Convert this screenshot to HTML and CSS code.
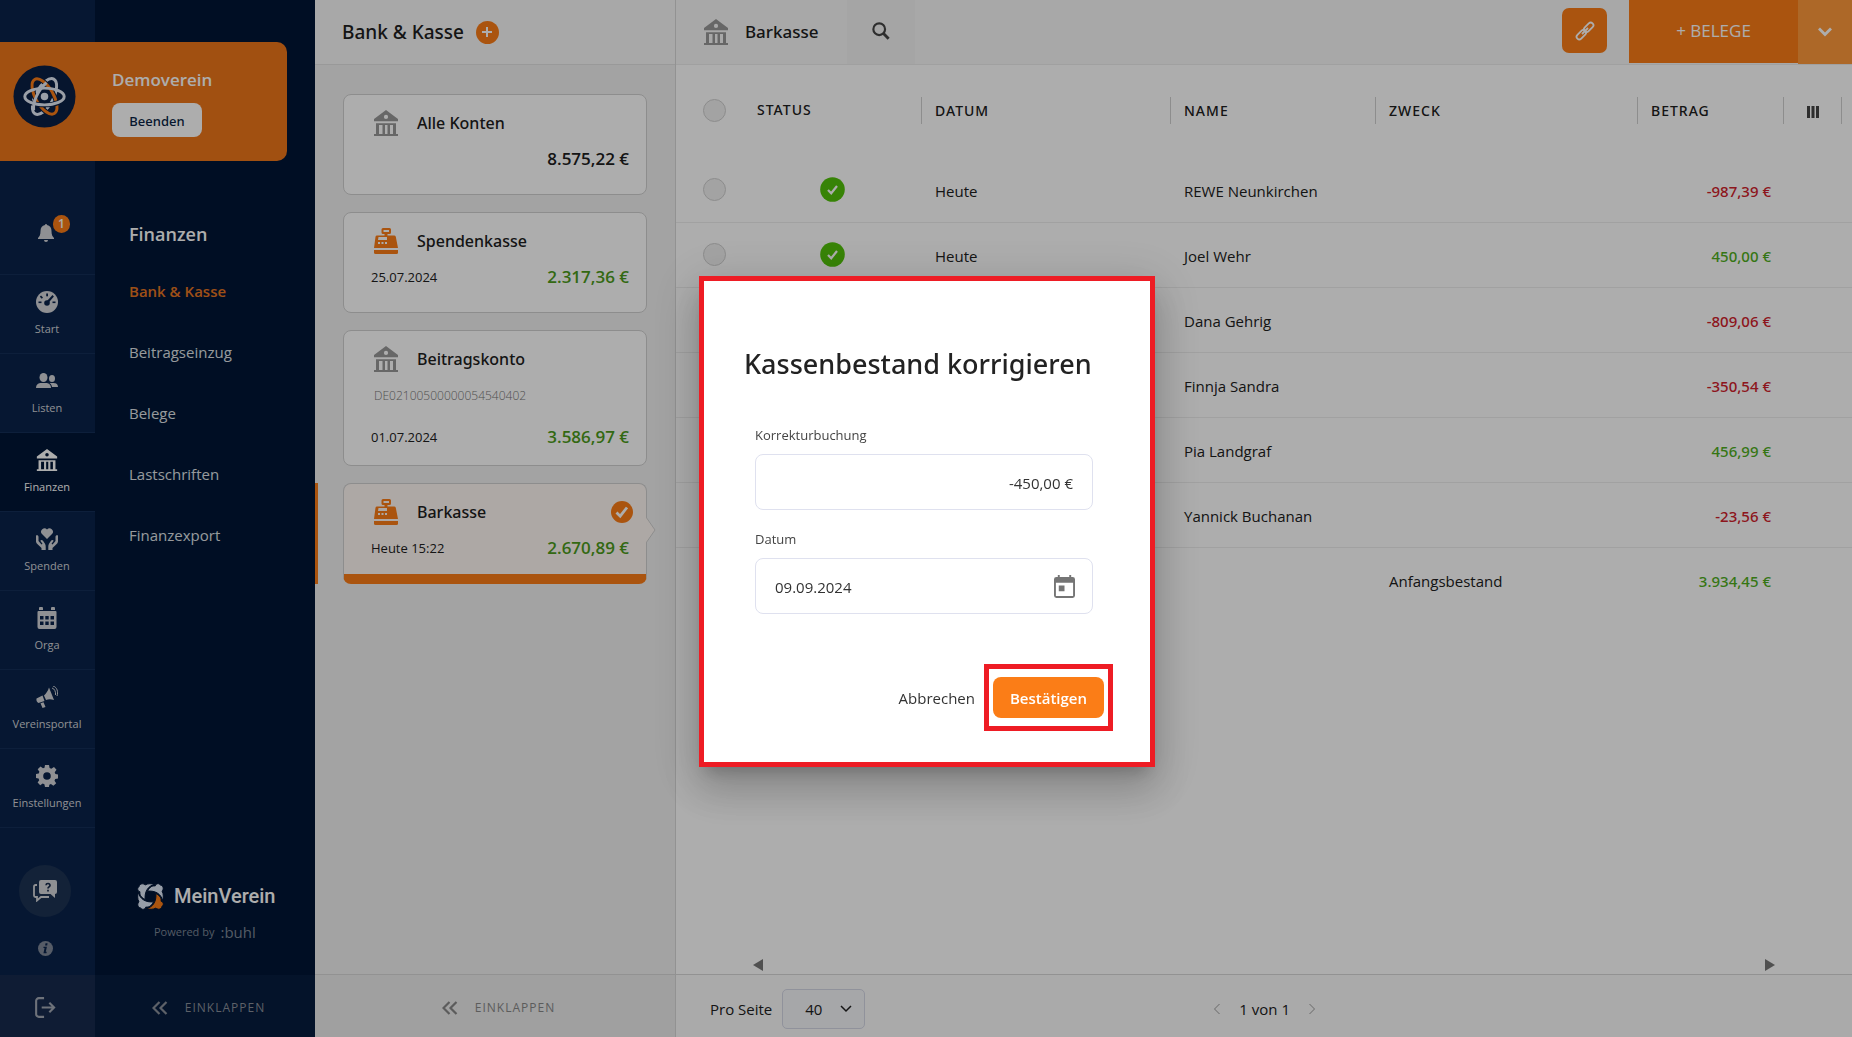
FILE: index.html
```html
<!DOCTYPE html>
<html lang="de">
<head>
<meta charset="utf-8">
<meta name="viewport" content="width=device-width, initial-scale=1">
<title>MeinVerein – Bank &amp; Kasse</title>
<link rel="stylesheet" href="styles.css">
</head>
<body>
<svg class="sprite" aria-hidden="true">
  <symbol id="bank" viewBox="0 0 24 26">
    <path fill-rule="evenodd" d="M12 0 24 9v2.200H0V9zM12 4.800a2.100 2.100 0 1 0 0 4.200 2.100 2.100 0 0 0 0-4.200z"/>
    <path d="M2 13.200h20V15H2zM2 15h3v9H2zM8.500 15h2.500v9H8.500zM13.500 15H16v9h-2.500zM19 15h3v9h-3zM0 24h24v2H0z"/>
  </symbol>
  <symbol id="register" viewBox="0 0 24 26">
    <path fill-rule="evenodd" d="M9 0h6.500a1.500 1.500 0 0 1 1.500 1.500v3A1.500 1.500 0 0 1 15.500 6h-2v1.500H20a1.800 1.800 0 0 1 1.800 1.300L24 20H0L1.500 8.700A1.500 1.500 0 0 1 3 7.500h7.500V6H9a1.500 1.500 0 0 1-1.500-1.500v-3A1.500 1.500 0 0 1 9 0zm.500 2v2H15V2zM4.500 9 4 12h9V9zM4 14v2h2v-2zm3.500 0v2h2v-2zm3.500 0v2h2v-2z"/>
    <path d="M0 22h24v2.500a1.500 1.500 0 0 1-1.500 1.500h-21A1.500 1.500 0 0 1 0 24.500z"/>
  </symbol>
  <symbol id="check" viewBox="0 0 22 22">
    <circle cx="11" cy="11" r="11"/>
    <path d="m5.500 11.500 3.700 3.700L16 6.500" fill="none" stroke="#fff" stroke-width="2.800"/>
  </symbol>
  <symbol id="done" viewBox="0 0 25 25">
    <circle cx="12.500" cy="12.500" r="12.300"/>
    <path d="m8 13 3.200 3.300L17 9" fill="none" stroke="#fff" stroke-width="2.200"/>
  </symbol>
  <symbol id="collapse" viewBox="0 0 16 14">
    <path d="M7.500 1 1.500 7l6 6M14.500 1l-6 6 6 6" fill="none" stroke="currentColor" stroke-width="2.200"/>
  </symbol>
</svg>

<div class="app">
  <aside class="club">
    <svg class="club-logo" viewBox="0 0 64 64" aria-hidden="true">
      <circle cx="32" cy="32" r="31.500" fill="#0a1f44"/>
      <g fill="none" stroke-width="3">
        <ellipse cx="32" cy="32" rx="20" ry="9" transform="rotate(118 32 32)" stroke="#e4ebf7"/>
        <ellipse cx="32" cy="32" rx="20" ry="9" transform="rotate(60 32 32)" stroke="#0a1f44" stroke-width="5"/>
        <ellipse cx="32" cy="32" rx="20" ry="9" transform="rotate(60 32 32)" stroke="#fb7d17"/>
        <path d="M12 32a20 8.500 0 0 0 40 0" stroke="#0a1f44" stroke-width="5"/>
        <ellipse cx="32" cy="32" rx="20" ry="8.500" stroke="#e4ebf7"/>
        <path d="M34 18C25 26 20 38 21 46" stroke="#e4ebf7"/>
      </g>
      <circle cx="32" cy="32" r="3.800" fill="#e4ebf7"/>
    </svg>
    <div class="club-info">
      <strong>Demoverein</strong>
      <button type="button">Beenden</button>
    </div>
  </aside>

  <nav class="rail" aria-label="Hauptnavigation">
    <button class="bell" type="button" aria-label="Benachrichtigungen">
      <svg viewBox="0 0 16 18"><path d="M8 0a1 1 0 0 1 1 1c3 .500 4.500 3 4.500 6 0 4 1 5.500 2.500 7v1H0v-1c1.500-1.500 2.500-3 2.500-7 0-3 1.500-5.500 4.500-6a1 1 0 0 1 1-1zM6 16h4a2 2 0 0 1-4 0z"/></svg>
      <span class="badge">1</span>
    </button>
    <a href="#start"><svg viewBox="0 0 22 22"><path fill-rule="evenodd" d="M11 0a11 11 0 1 1 0 22 11 11 0 0 1 0-22z"/><g fill="#0a234b"><circle cx="11" cy="12" r="2.800"/><rect x="10.200" y="2.500" width="1.800" height="2.800"/><rect x="2.500" y="10.500" width="3" height="1.600"/><rect x="16.500" y="10.500" width="3" height="1.600"/><path d="m5 4.500 2 2-1.200 1.200-2-2zM16.500 4l1.400 1.400-6 7-1.600-1.600z"/></g></svg>Start</a>
    <a href="#listen"><svg viewBox="0 0 22 22"><ellipse cx="7.500" cy="7.500" rx="4" ry="4.500"/><path d="M0 18c0-4 3-4.800 5-5h5c2 .200 5 1 5 5z"/><ellipse cx="16" cy="8.500" rx="3" ry="3.500"/><path d="M13.500 13H18c2 .300 4 1 4 4h-6c-.300-2-1-3-2.500-4z"/></svg>Listen</a>
    <a class="current" href="#finanzen"><svg><use href="#bank"/></svg>Finanzen</a>
    <a href="#spenden"><svg viewBox="0 0 22 22"><path d="M11 11 6 6a3.200 3.200 0 0 1 5-4.500A3.200 3.200 0 0 1 16 6zM0 7.500c1.500-.500 2.500 0 2.500 1.500v4l3 3.500 1-.800-2.200-3c1-1.300 2-.800 2.700 0l2 3c.600 1 .700 2 .700 3V22H5.500v-2L.800 15.500C.200 14.500 0 14 0 13zM22 7.500c-1.500-.500-2.500 0-2.500 1.500v4l-3 3.500-1-.800 2.200-3c-1-1.300-2-.800-2.700 0l-2 3c-.600 1-.700 2-.700 3V22h4.200v-2l4.700-4.500c.600-1 .800-1.500.800-2.500z"/></svg>Spenden</a>
    <a href="#orga"><svg viewBox="0 0 22 22"><path fill-rule="evenodd" d="M3 1.500a1.500 1.500 0 0 1 4 0V3H3zM15 1.500a1.500 1.500 0 0 1 4 0V3h-4zM1.500 5a1 1 0 0 1 1-1h17a1 1 0 0 1 1 1v15a2 2 0 0 1-2 2h-15a2 2 0 0 1-2-2zM4 9v3.500h3.500V9zm5.300 0v3.500h3.400V9zm5.200 0v3.500H18V9zM4 14.500V18h3.500v-3.500zm5.300 0V18h3.400v-3.500zm5.200 0V18H18v-3.500z"/></svg>Orga</a>
    <a href="#vereinsportal"><svg viewBox="0 0 22 22"><path d="M13 1.500 18 14c-3-1-5.500-1-8 0L8 9.500c2-2 4-4.500 5-8zM6.500 9.500 8.500 15l-6 2C1 16.500 0 14.500.500 12.500zM4.500 17.200l3-1L9.500 21l-3 1z"/><path d="M16 2c2.500.500 4 4 3.500 7M17 0c4 1 5.500 6 4 10" fill="none" stroke="currentColor"/></svg>Vereinsportal</a>
    <a href="#einstellungen"><svg viewBox="0 0 22 22"><path fill-rule="evenodd" d="M9 0h4l.600 3 1.700.700L18 2l2.500 2.800-1.800 2.500.700 1.700 2.600.500v4l-2.800.500-.700 1.700 1.700 2.500-2.800 2.600-2.500-1.700-1.600.700L13 22H9l-.600-2.700-1.700-.700-2.500 1.700-2.600-2.800 1.600-2.300-.600-1.700L0 13V9l2.700-.500.700-1.700-1.700-2.500L4.500 1.600 7 3.300l1.500-.600zM11 7.200a3.800 3.800 0 1 0 0 7.600 3.800 3.800 0 0 0 0-7.600z"/></svg>Einstellungen</a>
    <div class="rail-tools">
      <button class="help" type="button" aria-label="Hilfe"><svg viewBox="0 0 24 22"><path d="M8 0h14a2 2 0 0 1 2 2v10a2 2 0 0 1-2 2v4l-4.500-4H8a2 2 0 0 1-2-2V2a2 2 0 0 1 2-2z"/><path d="M4 5H2.500A1.500 1.500 0 0 0 1 6.500v9A1.500 1.500 0 0 0 2.500 17H4v3.500L8 17h8" fill="none" stroke="currentColor" stroke-width="1.800"/><path d="M13 5.200c.200-2.400 4.200-2.200 4 .200 0 1.400-2 1.500-2 3M15 9.800v1.800" fill="none" stroke="#16294a" stroke-width="1.700"/></svg></button>
      <button class="info" type="button" aria-label="Info"><svg viewBox="0 0 16 16"><circle cx="8" cy="8" r="8"/><path d="M8 2.500h2.200l-.400 2.200H7.600zM6 6h3.500l-1.200 5.500h1l-.300 1.500H5.800l1.200-5.500H5.700z" fill="#0a234b"/></svg></button>
    </div>
    <button class="logout" type="button" aria-label="Abmelden"><svg viewBox="0 0 22 22"><path d="M9.500 1.200H4A2.800 2.800 0 0 0 1.200 4v14A2.800 2.800 0 0 0 4 20.800h5.500M7 11h13M15 6l5 5-5 5" fill="none" stroke="currentColor" stroke-width="2.200"/></svg></button>
  </nav>

  <nav class="submenu" aria-label="Finanzen">
    <div class="submenu-body">
      <h2>Finanzen</h2>
      <a class="current" href="#bank-kasse">Bank &amp; Kasse</a>
      <a href="#beitragseinzug">Beitragseinzug</a>
      <a href="#belege">Belege</a>
      <a href="#lastschriften">Lastschriften</a>
      <a href="#finanzexport">Finanzexport</a>
    </div>
    <div class="brand">
      <div class="brand-name">
        <svg viewBox="0 0 27 27" aria-hidden="true">
          <defs><path id="fig" d="M18.800 10.500C23.500 13 24.500 15.500 24 18.200c2.800.500 3 4.300.800 5.300-.300 3-4.300 3.500-5.800 1.500-3 1.800-7 1.500-9.500.500 6-1 10.300-7 9.300-15z"/></defs>
          <g fill="#dfe9f8" stroke="#001535"><use href="#fig" transform="rotate(90 13.500 13.500)"/><use href="#fig" transform="rotate(180 13.500 13.500)"/><use href="#fig" transform="rotate(270 13.500 13.500)"/></g>
          <use href="#fig" fill="#fb7d17" stroke="#001535"/>
        </svg>
        <span>MeinVerein</span>
      </div>
      <div class="powered">Powered by <b>:buhl</b></div>
    </div>
    <button class="collapse" type="button"><svg><use href="#collapse"/></svg>EINKLAPPEN</button>
  </nav>

  <section class="accounts">
    <header>
      <h1>Bank &amp; Kasse</h1>
      <button class="add" type="button" aria-label="Konto hinzufügen"><svg viewBox="0 0 10 10"><path d="M5 0v10M0 5h10" stroke="#fff" stroke-width="2"/></svg></button>
    </header>
    <ul>
      <li><a class="card" href="#alle">
        <span class="card-head"><svg><use href="#bank"/></svg>Alle Konten</span>
        <span class="card-foot"><span></span><b class="total">8.575,22 €</b></span>
      </a></li>
      <li><a class="card" href="#spendenkasse">
        <span class="card-head cash"><svg><use href="#register"/></svg>Spendenkasse</span>
        <span class="card-foot"><span>25.07.2024</span><b>2.317,36 €</b></span>
      </a></li>
      <li><a class="card" href="#beitragskonto">
        <span class="card-head"><svg><use href="#bank"/></svg>Beitragskonto</span>
        <span class="iban">DE02100500000054540402</span>
        <span class="card-foot"><span>01.07.2024</span><b>3.586,97 €</b></span>
      </a></li>
      <li class="active"><a class="card" href="#barkasse">
        <span class="card-head cash"><svg><use href="#register"/></svg>Barkasse<svg class="tick"><use href="#check"/></svg></span>
        <span class="card-foot"><span>Heute 15:22</span><b>2.670,89 €</b></span>
        <svg class="notch" viewBox="0 0 10 28"><path d="M0 1 9 14 0 27" fill="#fff8f4" stroke="#d0d0d0"/></svg>
      </a></li>
    </ul>
    <button class="collapse" type="button"><svg><use href="#collapse"/></svg>EINKLAPPEN</button>
  </section>

  <main>
    <header>
      <h2><svg><use href="#bank"/></svg>Barkasse</h2>
      <button class="search" type="button" aria-label="Suchen"><svg viewBox="0 0 20 20"><circle cx="8" cy="8" r="6.500" fill="none" stroke="currentColor" stroke-width="2.400"/><path d="m12.500 12.500 6 6" stroke="currentColor" stroke-width="3.200"/></svg></button>
      <span class="spacer"></span>
      <button class="link" type="button" aria-label="Verknüpfen"><svg viewBox="0 0 20 20" stroke="#fff" stroke-width="1.800"><rect x="8.200" y="3.600" width="11" height="5.400" rx="2.700" transform="rotate(-45 13.700 6.300)"/><rect x=".800" y="11" width="11" height="5.400" rx="2.700" transform="rotate(-45 6.300 13.700)"/><path d="m7 13 6-6"/></svg></button>
      <button class="receipts" type="button">+ BELEGE</button>
      <button class="more" type="button" aria-label="Weitere Aktionen"><svg viewBox="0 0 14 10"><path d="m1 1.500 6 6 6-6" fill="none" stroke="#fff" stroke-width="2.800"/></svg></button>
    </header>

    <div class="table-wrap">
      <table>
        <colgroup><col class="c-pick"><col class="c-status"><col class="c-date"><col class="c-name"><col class="c-purpose"><col class="c-amount"><col class="c-tools"><col class="c-end"></colgroup>
        <thead>
          <tr>
            <th><input type="checkbox" aria-label="Alle auswählen"></th>
            <th>STATUS</th>
            <th><span>DATUM</span></th>
            <th><span>NAME</span></th>
            <th><span>ZWECK</span></th>
            <th><span>BETRAG</span></th>
            <th><span class="tools"><button type="button" aria-label="Spalten"><svg viewBox="0 0 12 12"><path d="M0 0h3v12H0zM4.500 0h3v12h-3zM9 0h3v12H9z"/></svg></button></span></th>
            <th><span></span></th>
          </tr>
        </thead>
        <tbody>
          <tr><td class="pick"><input type="checkbox" aria-label="REWE Neunkirchen"></td><td class="state"><svg><use href="#done"/></svg></td><td>Heute</td><td>REWE Neunkirchen</td><td></td><td class="minus">-987,39 €</td><td></td><td></td></tr>
          <tr><td class="pick"><input type="checkbox" aria-label="Joel Wehr"></td><td class="state"><svg><use href="#done"/></svg></td><td>Heute</td><td>Joel Wehr</td><td></td><td class="plus">450,00 €</td><td></td><td></td></tr>
          <tr><td></td><td></td><td></td><td>Dana Gehrig</td><td></td><td class="minus">-809,06 €</td><td></td><td></td></tr>
          <tr><td></td><td></td><td></td><td>Finnja Sandra</td><td></td><td class="minus">-350,54 €</td><td></td><td></td></tr>
          <tr><td></td><td></td><td></td><td>Pia Landgraf</td><td></td><td class="plus">456,99 €</td><td></td><td></td></tr>
          <tr><td></td><td></td><td></td><td>Yannick Buchanan</td><td></td><td class="minus">-23,56 €</td><td></td><td></td></tr>
          <tr><td></td><td></td><td></td><td></td><td>Anfangsbestand</td><td class="plus">3.934,45 €</td><td></td><td></td></tr>
        </tbody>
      </table>
    </div>

    <div class="scroller" aria-hidden="true">
      <svg viewBox="0 0 10 12"><path d="M10 0v12L0 6z"/></svg>
      <svg viewBox="0 0 10 12"><path d="M0 0v12l10-6z"/></svg>
    </div>

    <footer>
      <label for="per-page">Pro Seite</label>
      <span class="select"><select id="per-page"><option>40</option></select><svg viewBox="0 0 12 8"><path d="m1 1 5 5 5-5" fill="none" stroke="currentColor" stroke-width="1.500"/></svg></span>
      <div class="pager">
        <button type="button" aria-label="Zurück"><svg viewBox="0 0 8 12"><path d="M6.500 1 1.500 6l5 5" fill="none" stroke="currentColor"/></svg></button>
        <span>1 von 1</span>
        <button type="button" aria-label="Weiter"><svg viewBox="0 0 8 12"><path d="m1.500 1 5 5-5 5" fill="none" stroke="currentColor"/></svg></button>
      </div>
    </footer>
  </main>
</div>

<div class="backdrop">
  <form class="dialog" role="dialog" aria-labelledby="dialog-title">
    <h2 id="dialog-title">Kassenbestand korrigieren</h2>
    <div class="field">
      <label for="amount">Korrekturbuchung</label>
      <div class="box"><input class="amount" id="amount" type="text" value="-450,00 €"></div>
    </div>
    <div class="field">
      <label for="date">Datum</label>
      <div class="box">
        <input id="date" type="text" value="09.09.2024">
        <button type="button" aria-label="Kalender öffnen"><svg viewBox="0 0 22 24"><path fill-rule="evenodd" d="M4 0h2v2h10V0h2v2h1.500A2.500 2.500 0 0 1 22 4.500v17a2.500 2.500 0 0 1-2.500 2.500h-17A2.500 2.500 0 0 1 0 21.500v-17A2.500 2.500 0 0 1 2.500 2H4zM2 8v14h18V8zM5 11h6v6H5z"/></svg></button>
      </div>
    </div>
    <div class="actions">
      <button class="cancel" type="button">Abbrechen</button>
      <span class="marker"><button class="confirm" type="submit">Bestätigen</button></span>
    </div>
  </form>
</div>
</body>
</html>
```

FILE: styles.css
```css
:root {
  --orange: #fb7d17;
  --navy: #001535;
  --rail: #0a234b;
  --ink: #202020;
  --mark: #ee1c24;
  --medium: "Noto Sans", "Open Sans", sans-serif;
}

* {
  box-sizing: border-box;
}

body {
  margin: 0;
  color: var(--ink);
  font: 15px/20px "Open Sans", "Noto Sans", sans-serif;
}

h1,
h2,
ul {
  margin: 0;
  padding: 0;
}

button,
input,
select {
  margin: 0;
  padding: 0;
  border: 0;
  background: none;
  color: inherit;
  font: inherit;
}

a {
  color: inherit;
  text-decoration: none;
}

svg {
  display: block;
  flex: none;
  fill: currentColor;
}

.sprite {
  position: absolute;
  width: 0;
  height: 0;
}

.app {
  position: relative;
  display: grid;
  grid-template-columns: 95px 220px 361px minmax(0, 1fr);
  min-height: 100vh;
}

/* Club banner laid over both navigation columns */
.club {
  position: absolute;
  top: 42px;
  left: 0;
  display: flex;
  align-items: flex-start;
  gap: 36px;
  width: 287px;
  height: 119px;
  padding: 23px 13px;
  border-radius: 0 10px 10px 0;
  background: #ee761a;
}

.club-logo {
  width: 63px;
  height: 63px;
}

.club-info {
  display: flex;
  flex-direction: column;
  align-items: flex-start;
  gap: 11px;
  padding-top: 3px;
}

.club-info strong {
  color: #fff;
  font-size: 17px;
  font-weight: 600;
  line-height: 24px;
}

.club-info button {
  width: 90px;
  height: 34px;
  padding-top: 1px;
  border-radius: 8px;
  background: #fff;
  color: #0a1f44;
  font: 500 13px/20px var(--medium);
}

/* Icon rail */
.rail {
  display: flex;
  flex-direction: column;
  background: var(--rail);
  color: #d3d5d9;
}

.rail > a {
  display: flex;
  flex-direction: column;
  align-items: center;
  gap: 8px;
  height: 79px;
  padding: 16px 1px 0 0;
  border-bottom: 1px solid #142e57;
  font-size: 11px;
  line-height: 16px;
}

.rail > a svg {
  width: 22px;
  height: 22px;
}

.rail > .current {
  background: var(--navy);
  color: #fff;
}

.bell {
  position: relative;
  display: flex;
  justify-content: center;
  align-items: flex-end;
  height: 275px;
  padding: 0 3px 32px 0;
  border-bottom: 1px solid #142e57;
}

.bell svg {
  width: 16px;
  height: 18px;
}

.badge {
  position: absolute;
  top: 215px;
  left: 53px;
  width: 17px;
  height: 18px;
  border-radius: 9px;
  background: var(--orange);
  color: #fff;
  font-size: 12px;
  font-weight: 600;
  line-height: 18px;
}

.rail-tools {
  display: flex;
  flex: 1;
  flex-direction: column;
  align-items: center;
  justify-content: flex-end;
  gap: 24px;
  padding: 24px 5px 19px 0;
}

.help {
  display: grid;
  place-items: center;
  width: 52px;
  height: 52px;
  border-radius: 50%;
  background: #1d3353;
}

.help svg {
  width: 24px;
  height: 22px;
}

.info {
  color: #7f8898;
}

.info svg {
  width: 15px;
  height: 15px;
}

.logout {
  display: grid;
  place-items: center;
  height: 62px;
  padding: 3px 5px 0 0;
  background: #172a4d;
  color: #a2a8b4;
}

.logout svg {
  width: 21px;
  height: 21px;
}

/* Section menu */
.submenu {
  display: flex;
  flex-direction: column;
  background: var(--navy);
  color: #dfe2e6;
}

.submenu-body {
  display: flex;
  flex: 1;
  flex-direction: column;
  padding: 222px 0 0 34px;
}

.submenu h2 {
  margin-bottom: 15px;
  color: #fff;
  font-size: 18px;
  font-weight: 600;
  line-height: 24px;
}

.submenu-body a {
  line-height: 61px;
}

.submenu-body .current {
  color: #e87722;
  font-weight: 600;
}

.brand {
  display: flex;
  flex-direction: column;
  gap: 10px;
  padding: 0 0 31px 42px;
}

.brand-name {
  display: flex;
  align-items: center;
  gap: 10px;
  color: #fff;
  font: 500 20px/28px Roboto, "Open Sans", sans-serif;
}

.brand-name svg {
  width: 27px;
  height: 27px;
}

.powered {
  display: flex;
  align-items: center;
  gap: 6px;
  padding-left: 17px;
  color: #7d8796;
  font-size: 11px;
}

.powered b {
  font: 400 15px/24px "Open Sans", sans-serif;
}

.collapse {
  display: flex;
  align-items: center;
  justify-content: center;
  gap: 17px;
  height: 62px;
  padding-top: 3px;
  font-size: 12px;
  letter-spacing: 1px;
}

.collapse svg {
  width: 16px;
  height: 14px;
}

.submenu .collapse {
  padding-left: 7px;
  background: #061c3f;
  color: #8a909a;
}

/* Account list */
.accounts {
  display: flex;
  flex-direction: column;
  border-right: 1px solid #d8d8d8;
  background: #f1f1f1;
}

.accounts > header {
  display: flex;
  align-items: center;
  gap: 12px;
  height: 65px;
  padding: 0 27px;
  border-bottom: 1px solid #e2e2e2;
  background: #f8f8f8;
}

.accounts h1 {
  font: 500 19px/26px var(--medium);
}

.add {
  display: grid;
  place-items: center;
  width: 23px;
  height: 23px;
  border-radius: 50%;
  background: var(--orange);
}

.add svg {
  width: 10px;
  height: 10px;
}

.accounts ul {
  display: flex;
  flex: 1;
  flex-direction: column;
  gap: 17px;
  padding-top: 29px;
  list-style: none;
}

.accounts li {
  padding: 0 28px;
}

.accounts .active {
  padding-left: 25px;
  border-left: 3px solid var(--orange);
}

.card {
  position: relative;
  display: flex;
  flex-direction: column;
  min-height: 101px;
  padding: 14px 17px 16px 27px;
  border: 1px solid #d0d0d0;
  border-radius: 8px;
  background: #fff;
}

.active .card {
  padding-bottom: 6px;
  border-bottom: 10px solid var(--orange);
  background: #fff8f4;
}

.card-head {
  display: flex;
  align-items: center;
  gap: 19px;
  padding-left: 3px;
  font: 500 16px/28px var(--medium);
}

.card-head svg {
  width: 24px;
  height: 26px;
  color: #999;
}

.card-head.cash svg {
  color: var(--orange);
}

.card-head .tick {
  width: 22px;
  height: 22px;
  margin: 0 -4px 0 auto;
}

.iban {
  padding: 13px 0 9px 3px;
  color: #777;
  font-size: 12px;
  font-weight: 300;
  line-height: 20px;
}

.card-foot {
  display: flex;
  align-items: center;
  justify-content: space-between;
  padding-top: 10px;
  font-size: 13px;
  line-height: 24px;
}

.card-foot b {
  color: #4c9b1b;
  font-size: 17px;
  font-weight: 600;
}

.card-foot .total {
  color: var(--ink);
}

.notch {
  position: absolute;
  top: 32px;
  right: -10px;
  width: 10px;
  height: 28px;
}

.accounts .collapse {
  height: 63px;
  padding-left: 7px;
  border-top: 1px solid #d8d8d8;
  background: #ececec;
  color: #888;
}

/* Bookings */
main {
  display: flex;
  flex-direction: column;
  background: #fff;
}

main > header {
  display: flex;
  height: 65px;
  padding-left: 28px;
  border-bottom: 1px solid #ececec;
  background: #f8f8f8;
}

main h2 {
  display: flex;
  align-items: center;
  gap: 17px;
  width: 143px;
  font: 500 17px/26px var(--medium);
}

main h2 svg {
  width: 24px;
  height: 26px;
  color: #999;
}

.search {
  display: grid;
  place-items: center;
  width: 68px;
  padding-bottom: 2px;
  background: #f3f3f3;
  color: #444;
}

.search svg {
  width: 18px;
  height: 18px;
}

.spacer {
  flex: 1;
}

.link {
  display: grid;
  place-items: center;
  width: 45px;
  height: 45px;
  margin: 8px 22px 0 0;
  border-radius: 7px;
  background: var(--orange);
}

.link svg {
  width: 20px;
  height: 20px;
  fill: none;
}

.receipts {
  width: 169px;
  height: 63px;
  padding-bottom: 2px;
  background: var(--orange);
  color: #fff;
  font-size: 17px;
}

.more {
  display: grid;
  place-items: center;
  width: 54px;
  background: #ff9a3c;
}

.more svg {
  width: 14px;
  height: 10px;
}

.table-wrap {
  flex: 1;
}

table {
  width: 100%;
  border-collapse: collapse;
  table-layout: fixed;
}

.c-pick { width: 81px; }
.c-status { width: 164px; }
.c-date { width: 249px; }
.c-name { width: 205px; }
.c-amount { width: 146px; }
.c-tools { width: 58px; }
.c-end { width: 11px; }

th,
td {
  height: 65px;
  padding: 3px 0 0 14px;
  text-align: left;
}

th {
  height: 92px;
  padding: 0 0 2px 14px;
  font: 500 14px/20px var(--medium);
  letter-spacing: 1px;
}

th:nth-child(2) {
  padding-left: 0;
}

th:first-child,
.pick {
  padding-top: 0;
  padding-left: 27px;
}

th span {
  display: block;
  height: 27px;
  margin-left: -14px;
  padding-left: 13px;
  border-left: 1px solid #d0d0d0;
  line-height: 27px;
}

th .tools {
  display: grid;
  place-items: center;
  padding: 3px 0 0;
}

.tools svg {
  width: 12px;
  height: 12px;
  color: #444;
}

tbody tr {
  border-bottom: 1px solid #ededed;
}

tbody tr:last-child {
  border-bottom: 0;
}

input[type="checkbox"] {
  display: block;
  width: 23px;
  height: 23px;
  border: 1px solid #cfcfcf;
  border-radius: 50%;
  background: #f0f0f0;
  appearance: none;
}

.state {
  padding-top: 0;
  padding-left: 63px;
}

.state svg {
  width: 25px;
  height: 25px;
  color: #52c20a;
}

.minus,
.plus {
  padding-right: 12px;
  padding-left: 0;
  font: 500 15px/20px var(--medium);
  text-align: right;
}

.minus {
  color: #d0212b;
}

.plus {
  color: #4fae1c;
}

.scroller {
  display: flex;
  justify-content: space-between;
  padding: 0 77px 3px;
  color: #777;
}

.scroller svg {
  width: 10px;
  height: 12px;
}

main > footer {
  display: flex;
  align-items: center;
  height: 63px;
  padding: 5px 0 0 34px;
  border-top: 1px solid #d8d8d8;
  background: #fbfbfb;
}

.select {
  position: relative;
  margin-left: 10px;
}

.select select {
  display: block;
  width: 83px;
  height: 40px;
  padding-left: 22px;
  border: 1px solid #d5d8e5;
  border-radius: 5px;
  background: #f5f6fa;
  appearance: none;
}

.select svg {
  position: absolute;
  top: 16px;
  right: 13px;
  width: 12px;
  height: 8px;
  pointer-events: none;
}

.pager {
  display: flex;
  flex: 1;
  align-items: center;
  justify-content: center;
  gap: 18px;
  padding-right: 188px;
}

.pager button {
  color: #999;
}

.pager svg {
  width: 8px;
  height: 12px;
}

/* Correction dialog */
.backdrop {
  position: fixed;
  inset: 0;
  display: grid;
  place-items: center;
  padding: 6px 0 0 2px;
  background: rgb(0 0 0 / 32%);
}

.dialog {
  width: 456px;
  padding: 64px 37px 31px 40px;
  border: 5px solid var(--mark);
  background: #fff;
  box-shadow: 0 11px 15px -7px rgb(0 0 0 / 20%), 0 24px 38px 3px rgb(0 0 0 / 14%), 0 9px 46px 8px rgb(0 0 0 / 12%);
}

.dialog h2 {
  margin-bottom: 43px;
  color: #222;
  font: 500 27px/38px var(--medium);
}

.field {
  margin: 0 20px 20px 11px;
}

.field label {
  display: block;
  margin-bottom: 10px;
  color: #444;
  font-size: 13px;
  line-height: 18px;
}

.box {
  display: flex;
  align-items: center;
  height: 56px;
  padding: 1px 17px 0 19px;
  border: 1px solid #dfe1ef;
  border-radius: 8px;
}

.box input {
  flex: 1;
  min-width: 0;
  color: #333;
  outline: 0;
}

.box .amount {
  padding-right: 2px;
  text-align: right;
}

.box button {
  color: #757575;
}

.box svg {
  width: 21px;
  height: 23px;
}

.actions {
  display: flex;
  align-items: center;
  justify-content: flex-end;
  gap: 9px;
  padding-top: 30px;
}

.cancel {
  color: #333;
}

.marker {
  padding: 8px 4px;
  border: 5px solid var(--mark);
}

.confirm {
  display: block;
  width: 111px;
  height: 41px;
  border-radius: 8px;
  background: var(--orange);
  color: #fff;
  font-weight: 600;
}
```
